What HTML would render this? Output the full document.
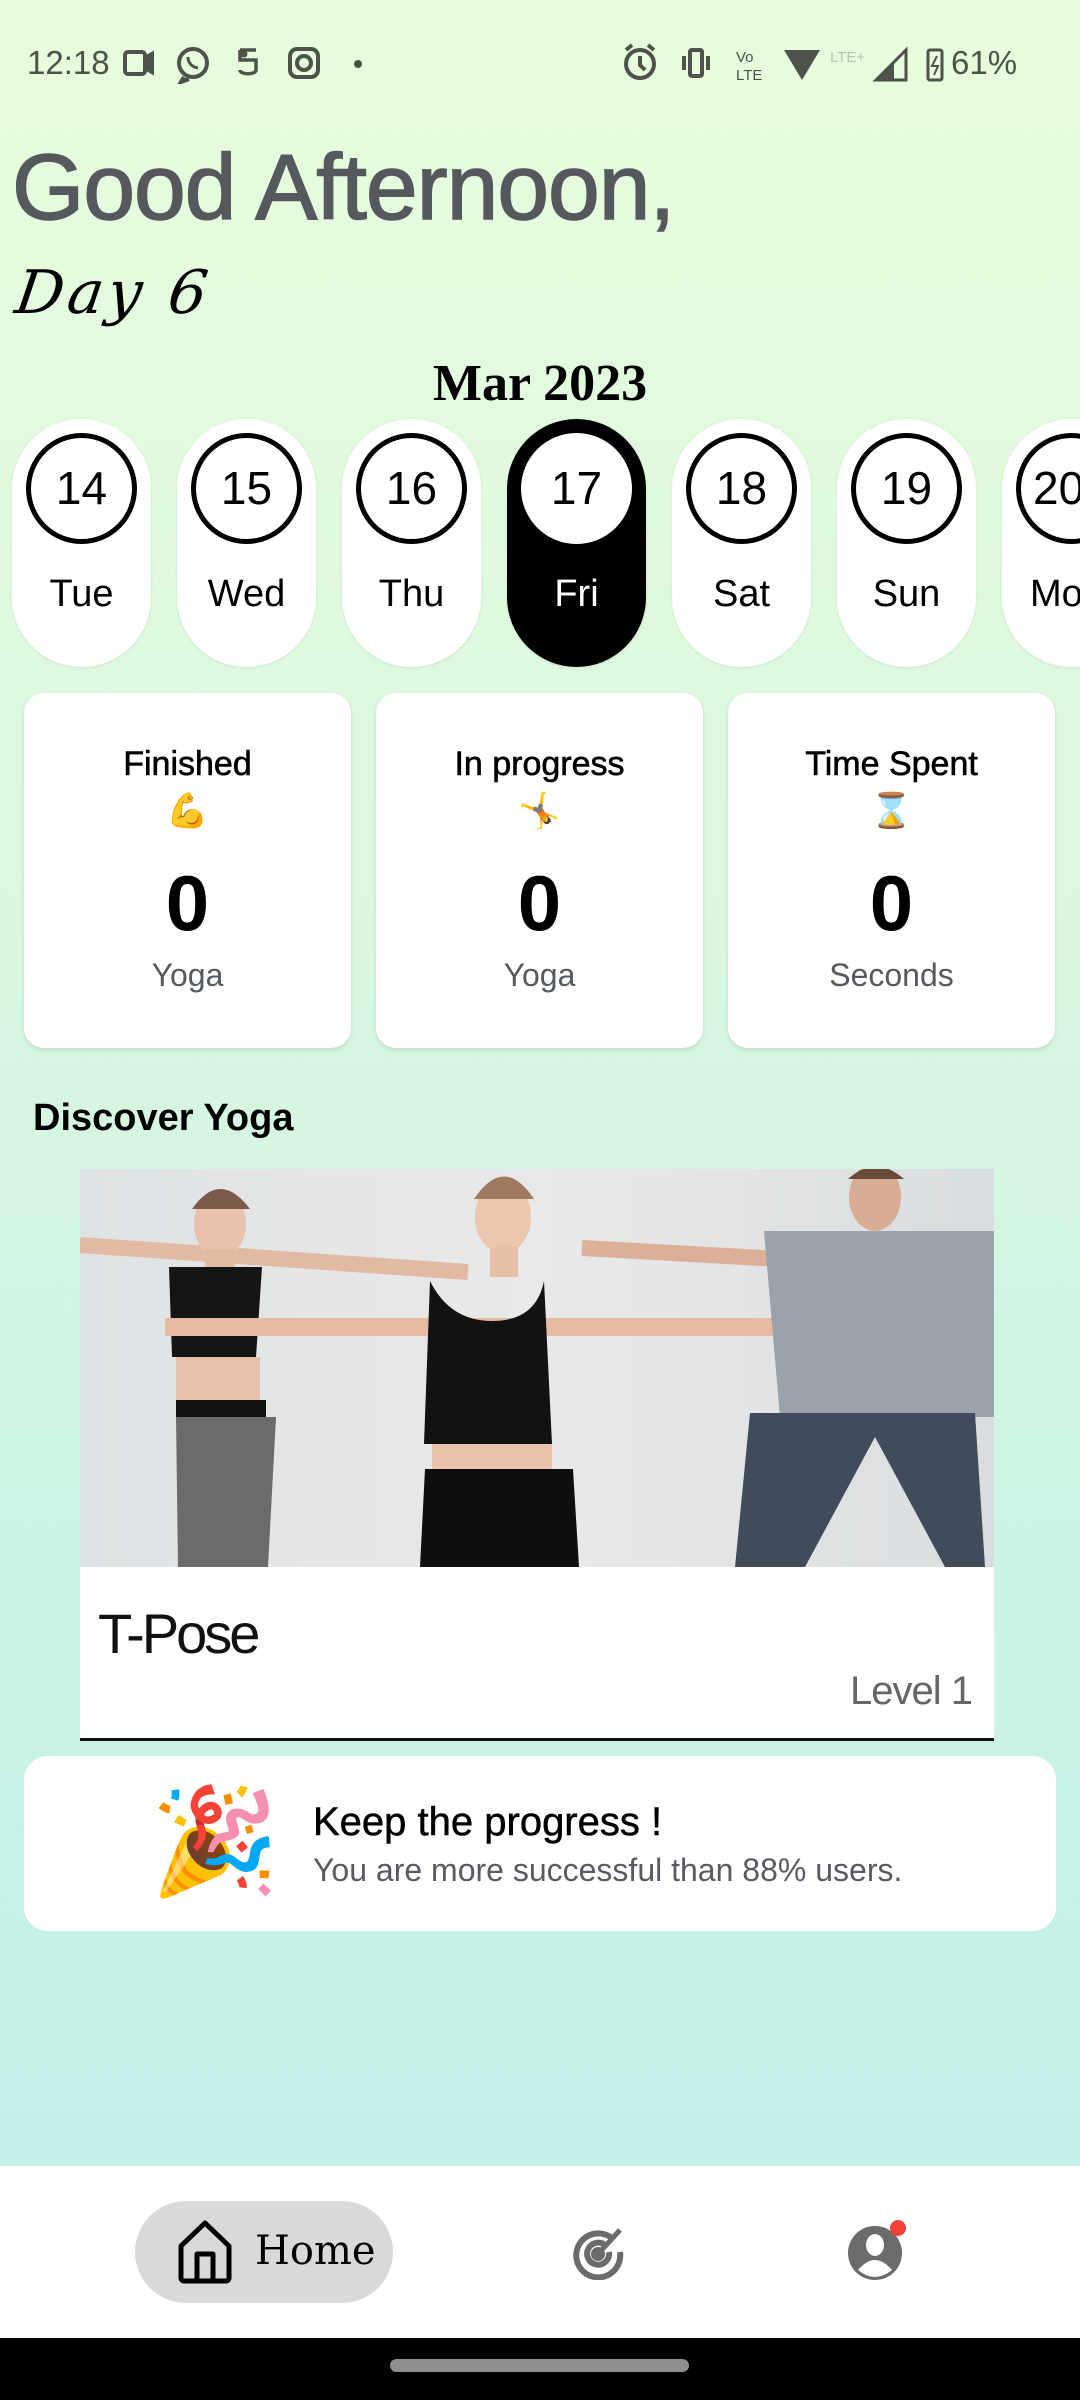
<!DOCTYPE html>
<html><head><meta charset="utf-8"><style>
*{margin:0;padding:0;box-sizing:border-box}
body{width:1080px;height:2400px;position:relative;overflow:hidden;font-family:"Liberation Sans",sans-serif;background:linear-gradient(180deg,#e7fcdc 0%,#dcf8e0 35%,#c9f3e6 70%,#c2f0e9 90%)}
.abs{position:absolute}
.sb{color:#4d524a;font-size:33px;top:44px;font-family:"Liberation Sans Narrow","Liberation Sans",sans-serif}
.pill{position:absolute;top:419px;width:139px;height:248px;border-radius:70px;background:#fff;box-shadow:0 1px 3px rgba(0,0,0,.08)}
.pill .c{position:absolute;left:14px;top:14px;width:111px;height:111px;border-radius:50%;border:5px solid #000;background:#fff;text-align:center;line-height:101px;font-size:46px;color:#000}
.pill .d{position:absolute;top:154px;width:100%;text-align:center;font-size:38px;color:#000}
.pill.sel{background:#000}.pill.sel .c{border-color:#fff}.pill.sel .d{color:#fff}
.card{position:absolute;top:693px;width:327px;height:355px;background:#fff;border-radius:20px;box-shadow:0 2px 4px rgba(0,0,0,.12);text-align:center}
.card .t{position:absolute;top:52px;width:100%;font-size:34px;color:#000;-webkit-text-stroke:0.6px #000}
.card .e{position:absolute;top:98px;width:100%;font-size:34px}
.card .n{position:absolute;top:165px;width:100%;font-size:78px;font-weight:bold;color:#000}
.card .s{position:absolute;top:264px;width:100%;font-size:32px;color:#555a60}
</style></head><body>
<div class="abs sb" style="left:27px">12:18</div>
<svg class="abs" style="left:120px;top:44px" width="260" height="40" viewBox="0 0 260 40" fill="none" stroke="#4d524a" stroke-width="4">
<rect x="5" y="8" width="20" height="22" rx="3"/><path d="M25 14l7-4v18l-7-4" fill="#4d524a"/>
<circle cx="73" cy="19" r="14"/><path d="M64 33l-3 5 8-3"/><path d="M68 13c0 6 4 10 10 11" stroke-width="3"/>
<path d="M120 6h16M120 6v10h16v10c0 5-16 5-16 0" stroke-width="3.5"/><circle cx="124" cy="10" r="1.5" fill="#4d524a"/>
<rect x="170" y="5" width="28" height="28" rx="7"/><circle cx="184" cy="19" r="7"/>
<circle cx="238" cy="20" r="4" fill="#4d524a" stroke="none"/></svg>
<svg class="abs" style="left:618px;top:40px" width="400" height="46" viewBox="0 0 400 46" fill="none" stroke="#4d524a" stroke-width="4">
<circle cx="22" cy="24" r="14"/><path d="M22 16v9l5 5M8 10l6-5M36 10l-6-5"/>
<rect x="72" y="10" width="12" height="26" rx="2"/><path d="M66 16v14M90 16v14"/>
<text x="118" y="22" font-size="15" fill="#4d524a" stroke="none" font-family="Liberation Sans">Vo</text><text x="118" y="40" font-size="15" fill="#4d524a" stroke="none" font-family="Liberation Sans">LTE</text>
<path d="M166 10h36l-18 30z" fill="#4d524a" stroke="none"/>
<text x="212" y="22" font-size="15" fill="#b8c4b0" stroke="none" font-family="Liberation Sans">LTE+</text>
<path d="M258 40l30-30v30z" fill="none" stroke-width="3"/><path d="M258 40l18-18v18z" fill="#4d524a" stroke="none"/>
<rect x="310" y="10" width="14" height="30" rx="2" stroke-width="3"/><path d="M319 16l-5 10h6l-4 9" stroke-width="2"/>
</svg>
<div class="abs sb" style="left:951px;top:44px">61%</div>

<div class="abs" style="left:12px;top:134px;font-size:93px;color:#55585c;letter-spacing:-1px;-webkit-text-stroke:1.5px #55585c">Good Afternoon,</div>
<div class="abs" style="left:16px;top:258px;font-size:60px;color:#000;font-family:'DejaVu Serif',serif;font-style:italic;letter-spacing:4px;transform:skewX(-8deg)">Day 6</div>
<div class="abs" style="left:0;width:1080px;top:354px;text-align:center;font-size:52px;font-weight:bold;font-family:'Liberation Serif',serif;color:#000">Mar 2023</div>

<div class="pill" style="left:12px"><div class="c">14</div><div class="d">Tue</div></div>
<div class="pill" style="left:177px"><div class="c">15</div><div class="d">Wed</div></div>
<div class="pill" style="left:342px"><div class="c">16</div><div class="d">Thu</div></div>
<div class="pill sel" style="left:507px"><div class="c">17</div><div class="d">Fri</div></div>
<div class="pill" style="left:672px"><div class="c">18</div><div class="d">Sat</div></div>
<div class="pill" style="left:837px"><div class="c">19</div><div class="d">Sun</div></div>
<div class="pill" style="left:1002px"><div class="c" style="text-align:left;padding-left:12px">20</div><div class="d" style="text-align:left;padding-left:28px">Mon</div></div>

<div class="card" style="left:24px"><div class="t">Finished</div><div class="e">💪</div><div class="n">0</div><div class="s">Yoga</div></div>
<div class="card" style="left:376px"><div class="t">In progress</div><div class="e">🤸</div><div class="n">0</div><div class="s">Yoga</div></div>
<div class="card" style="left:728px"><div class="t">Time Spent</div><div class="e">⌛</div><div class="n">0</div><div class="s">Seconds</div></div>

<div class="abs" style="left:33px;top:1097px;font-size:38px;font-weight:bold;color:#000">Discover Yoga</div>

<div class="abs" style="left:80px;top:1169px;width:914px;height:572px;background:#fff;border-bottom:3px solid #111">
<svg width="914" height="398" viewBox="0 0 914 398" style="display:block">
<defs><linearGradient id="w" x1="0" x2="1"><stop offset="0" stop-color="#dfe2e4"/><stop offset=".5" stop-color="#e8e9ea"/><stop offset="1" stop-color="#dadddf"/></linearGradient></defs>
<rect width="914" height="398" fill="url(#w)"/>
<path d="M0 76L388 103" stroke="#e2b9a2" stroke-width="16"/>
<ellipse cx="140" cy="55" rx="26" ry="34" fill="#e8c2ac"/><path d="M112 40q28-40 58 0" fill="#7a5a48"/>
<rect x="125" y="80" width="30" height="25" fill="#e2b9a2"/>
<path d="M89 98h93l-6 90h-84z" fill="#151515"/>
<rect x="96" y="188" width="84" height="45" fill="#e6c0aa"/>
<rect x="96" y="231" width="90" height="18" fill="#111"/>
<path d="M96 248h100l-8 150h-90z" fill="#6b6b6b"/>
<path d="M85 158L815 158" stroke="#e5bba3" stroke-width="18"/>
<path d="M502 79L700 90" stroke="#dbb097" stroke-width="16"/>
<ellipse cx="795" cy="28" rx="26" ry="34" fill="#d9ad93"/><path d="M768 10q28-25 56 0" fill="#6a4a38"/>
<path d="M684 62h230v186H700z" fill="#9aa3a9"/>
<path d="M670 244h225l10 154h-40l-70-130-70 130h-70z" fill="#414b59"/>
<ellipse cx="423" cy="48" rx="28" ry="36" fill="#ecc5ae"/><path d="M394 30q30-45 60 0" fill="#a07a5e"/>
<rect x="410" y="78" width="28" height="30" fill="#e7bea6"/>
<path d="M350 112q20 40 62 40q44 0 52-40l8 163H344z" fill="#121212"/>
<rect x="352" y="275" width="120" height="30" fill="#eac3ab"/>
<path d="M345 300h148l6 98H340z" fill="#0e0e0e"/>
</svg>
<div class="abs" style="left:18px;top:432px;font-size:56px;color:#111;letter-spacing:-3px">T-Pose</div>
<div class="abs" style="right:22px;top:500px;font-size:40px;color:#666;letter-spacing:-1px">Level 1</div>
</div>

<div class="abs" style="left:24px;top:1756px;width:1032px;height:175px;background:#fff;border-radius:24px"></div>
<div class="abs" style="left:150px;top:1772px;font-size:104px;line-height:140px">🎉</div>
<div class="abs" style="left:313px;top:1800px;font-size:40px;color:#000;-webkit-text-stroke:0.5px #000">Keep the progress !</div>
<div class="abs" style="left:313px;top:1852px;font-size:32px;color:#5a5a66">You are more successful than 88% users.</div>

<div class="abs" style="left:0;top:2166px;width:1080px;height:172px;background:#fff"></div>
<div class="abs" style="left:135px;top:2201px;width:258px;height:102px;border-radius:51px;background:#d9d9d9"></div>
<svg class="abs" style="left:177px;top:2220px" width="56" height="64" viewBox="0 0 56 64" fill="none" stroke="#000" stroke-width="5" stroke-linejoin="round">
<path d="M4 26L28 3l24 23v32a3 3 0 0 1-3 3H7a3 3 0 0 1-3-3z"/><path d="M20 61V34h16v27"/></svg>
<div class="abs" style="left:255px;top:2228px;font-size:40px;font-family:'DejaVu Serif','Liberation Serif',serif;color:#000">Home</div>
<svg class="abs" style="left:570px;top:2224px" width="56" height="56" viewBox="0 0 56 56" fill="none" stroke="#6b6b6b" stroke-width="6">
<path d="M44 16A22 22 0 1 0 50 28"/><path d="M36 22A11 11 0 1 0 39 28"/><circle cx="28" cy="30" r="4" fill="#6b6b6b"/><path d="M28 30L50 6" stroke-width="5"/></svg>
<svg class="abs" style="left:846px;top:2218px" width="70" height="66" viewBox="0 0 70 66">
<circle cx="29" cy="35" r="27" fill="#6b6b6b"/><ellipse cx="29" cy="27" rx="9" ry="11" fill="#fff"/><path d="M12 52q17-20 34 0q-17 14-34 0z" fill="#fff"/>
<circle cx="52" cy="10" r="8" fill="#f44336"/></svg>

<div class="abs" style="left:0;top:2338px;width:1080px;height:62px;background:#000"></div>
<div class="abs" style="left:390px;top:2359px;width:299px;height:13px;border-radius:7px;background:#8e8e8e"></div>
</body></html>
